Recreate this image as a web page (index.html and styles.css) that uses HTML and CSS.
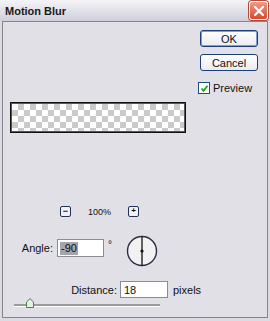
FILE: index.html
```html
<!DOCTYPE html>
<html lang="en">
<head>
  <meta charset="UTF-8">
  <title>Motion Blur</title>
  <link rel="stylesheet" href="styles.css">
</head>
<body>

<div class="window">
  <div class="titlebar">
    <span class="title">Motion Blur</span>
    <span class="close">
      <svg width="12" height="12" viewBox="0 0 12 12"><path d="M2 2 L10 10 M10 2 L2 10" stroke="#fff" stroke-width="2.2" stroke-linecap="round"/></svg>
    </span>
  </div>

  <div class="body">
    <div class="top">
      <div class="left">
        <div class="preview"></div>
      </div>
      <div class="right">
        <button class="btn default">OK</button>
        <button class="btn cancel">Cancel</button>
        <label class="check">
          <span class="box">
            <svg width="9" height="9" viewBox="0 0 9 9"><path d="M1.5 4.5 L3.5 6.8 L7.5 1.8" fill="none" stroke="#21a121" stroke-width="1.8"/></svg>
          </span>
          Preview
        </label>
      </div>
    </div>

    <div class="zoom">
      <span class="zbtn">&minus;</span>
      <span class="pct">100%</span>
      <span class="zbtn plus">+</span>
    </div>

    <div class="angle">
      <span class="lbl">Angle:</span>
      <span class="field"><span class="sel">-90</span></span>
      <span class="deg">°</span>
      <svg class="dial" width="32" height="32" viewBox="0 0 32 32">
        <circle cx="16" cy="16" r="14.5" fill="#f2f2f2" stroke="#2b2f45" stroke-width="1.4"/>
        <line x1="16" y1="1.5" x2="16" y2="30.5" stroke="#111" stroke-width="1.3"/>
        <circle cx="16" cy="16" r="1.6" fill="#111"/>
      </svg>
    </div>

    <div class="distance">
      <span class="lbl">Distance:</span>
      <span class="field">18</span>
      <span class="unit">pixels</span>
    </div>

    <div class="slider">
      <svg class="thumb" width="8" height="10" viewBox="0 0 8 10"><path d="M0.5 9.5 V4 L4 0.7 L7.5 4 V9.5 Z" fill="#e6f2e6" stroke="#3c8a3c"/></svg>
    </div>
  </div>
</div>

</body>
</html>
```

FILE: styles.css
```css
body { margin: 0; font-family: "Liberation Sans", Arial, sans-serif; font-size: 11px; color: #111; }
.window { width: 270px; height: 321px; background: linear-gradient(#f4f4f8, #cfcfda 21px, #dcdbe3 21px); box-sizing: border-box; }
.titlebar { height: 21px; display: flex; align-items: center; justify-content: space-between; padding: 0 2px 0 5px; }
.title { font-weight: bold; font-size: 11px; color: #1a1a1a; }
.close { width: 17px; height: 17px; border-radius: 3px; background: linear-gradient(#f29a86, #d5492f); border: 1px solid #fff; box-shadow: 0 0 0 1px #b24a3a; display: flex; align-items: center; justify-content: center; }
.body { margin: 0 2px; height: 297px; border: 1px solid #84848f; background: #e1e0e6; box-sizing: border-box; }
.top { display: flex; padding: 8px 9px 0 7px; }
.left { flex: 1; padding-top: 72px; }
.preview { width: 174px; height: 29px; border: 1px solid #111; box-shadow: inset 0 0 0 1px #555;
  background: conic-gradient(#cacaca 25%, #fff 0 50%, #cacaca 0 75%, #fff 0) 1px 1px / 12px 12px; }
.right { width: 58px; margin-left: 14px; display: flex; flex-direction: column; }
.btn { height: 17px; width: 58px; padding: 0; font-family: inherit; font-size: 11px; color: #111; background: linear-gradient(#ffffff, #ecebf0); border: 1px solid #1c3f78; border-radius: 3px; }
.btn.default { box-shadow: inset 0 0 0 1px #7d9fd4; }
.cancel { margin-top: 7px; }
.check { margin-top: 11px; display: flex; align-items: center; gap: 3px; margin-left: -2px; font-size: 11px; }
.box { width: 10px; height: 10px; border: 1px solid #1d4f86; background: #fff; display: flex; align-items: center; justify-content: center; }
.zoom { margin-top: 73px; height: 11px; display: flex; align-items: center; padding-left: 57px; }
.zbtn { width: 9px; height: 9px; border: 1px solid #22315a; border-radius: 2px; background: #f2f2f6; font-size: 9px; line-height: 8px; text-align: center; font-weight: bold; }
.pct { font-size: 9px; margin-left: 17px; width: 40px; }
.plus { font-size: 8px; }
.angle { margin-top: 22px; height: 18px; display: flex; align-items: center; }
.lbl { text-align: right; font-size: 11px; }
.angle .lbl { width: 50px; }
.field { width: 44px; height: 16px; border: 1px solid #8c8c94; background: #fff; margin-left: 4px; display: flex; align-items: center; padding-left: 2px; box-sizing: content-box; font-size: 11px; }
.angle .field { width: 43px; }
.sel { background: #a4a4ac; padding: 0 1px; line-height: 13px; }
.deg { margin-left: 4px; align-self: flex-start; font-size: 10px; }
.dial { margin-left: 14px; margin-top: 6px; }
.distance { margin-top: 24px; height: 17px; display: flex; align-items: center; }
.distance .lbl { width: 114px; }
.distance .field { margin-left: 3px; width: 43px; height: 15px; padding-left: 3px; }
.unit { margin-left: 5px; font-size: 11px; }
.slider { position: relative; margin: 6px 0 0 11px; width: 146px; height: 2px; background: #9a9aa0; border-bottom: 1px solid #fff; }
.thumb { position: absolute; left: 12px; top: -6px; }
```
